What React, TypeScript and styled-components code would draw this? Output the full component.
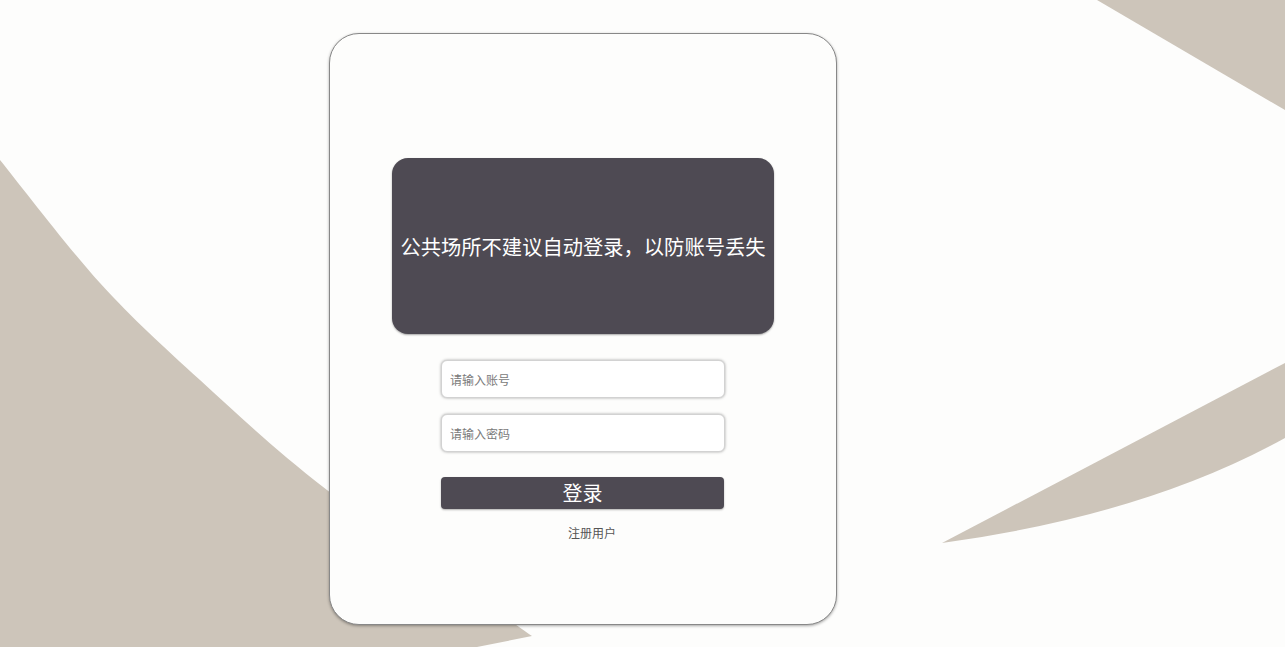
import React from "react";
import styled, { createGlobalStyle } from "styled-components";

const COLORS = {
  page: "#fdfdfc",
  beige: "#cdc5ba",
  dark: "#4e4a53",
  hint: "#7a7a7a",
  link: "#555555",
};

const GlobalStyle = createGlobalStyle`
  html, body {
    margin: 0;
    padding: 0;
    background: ${COLORS.page};
    font-family: "Noto Sans CJK SC", "Noto Sans", sans-serif;
  }
`;

const Backdrop: React.FC = () => (
  <BackdropSvg viewBox="0 0 1285 647" preserveAspectRatio="none">
    <path
      fill={COLORS.beige}
      d="M0,160 C16.7,180.5 66.7,246.3 100,283 C133.3,319.7 162.2,345.5 200,380 C237.8,414.5 271.7,447.3 327,490 C382.3,532.7 497.8,611.7 532,636 L477,647 L0,647 Z"
    />
    <path fill={COLORS.beige} d="M1097,0 L1285,0 L1285,110 Z" />
    <path fill={COLORS.beige} d="M942,543 L1285,363 L1285,438 Q1146,515 942,543 Z" />
  </BackdropSvg>
);

const App: React.FC = () => {
  return (
    <>
      <GlobalStyle />
      <Page>
        <Backdrop />
        <LoginCard>
          <Notice>公共场所不建议自动登录，以防账号丢失</Notice>
          <Form onSubmit={(e) => e.preventDefault()}>
            <Field type="text" placeholder="请输入账号" />
            <Field type="password" placeholder="请输入密码" />
            <SubmitButton type="submit">登录</SubmitButton>
          </Form>
          <RegisterLink href="#">注册用户</RegisterLink>
        </LoginCard>
      </Page>
    </>
  );
};

export default App;

const Page = styled.main`
  position: relative;
  width: 1285px;
  height: 647px;
  overflow: hidden;
  box-sizing: border-box;
  padding: 33px 0 0 329px;
  display: flex;
  align-items: flex-start;
`;

const BackdropSvg = styled.svg`
  position: absolute;
  inset: 0;
  width: 100%;
  height: 100%;
  z-index: 0;
`;

const LoginCard = styled.section`
  position: relative;
  z-index: 1;
  box-sizing: border-box;
  width: 508px;
  height: 592px;
  padding-top: 124px;
  background: ${COLORS.page};
  border: 1px solid #888888;
  border-radius: 30px;
  box-shadow: 0 1px 3px rgba(0, 0, 0, 0.35);
  display: flex;
  flex-direction: column;
  align-items: center;
`;

const Notice = styled.div`
  width: 382px;
  height: 176px;
  border-radius: 16px;
  background: ${COLORS.dark};
  box-shadow: 0 1px 2px rgba(0, 0, 0, 0.35);
  color: #ffffff;
  font-size: 20.3px;
  display: flex;
  align-items: center;
  justify-content: center;
  white-space: nowrap;
`;

const Form = styled.form`
  margin-top: 26px;
  width: 284px;
  display: flex;
  flex-direction: column;
`;

const Field = styled.input`
  box-sizing: border-box;
  width: 284px;
  height: 38px;
  margin: 0 0 16px;
  padding: 0 8px;
  border: 1px solid #d2d2d2;
  border-radius: 6px;
  background: #ffffff;
  box-shadow: 0 0 3px rgba(0, 0, 0, 0.35);
  font-family: "Noto Sans CJK SC", "Noto Sans", sans-serif;
  font-size: 12px;
  color: #333;
  outline: none;

  &::placeholder {
    color: ${COLORS.hint};
  }
`;

const SubmitButton = styled.button`
  margin-top: 9px;
  width: 283px;
  height: 32px;
  border: none;
  border-radius: 4px;
  background: ${COLORS.dark};
  box-shadow: 0 1px 2px rgba(0, 0, 0, 0.3);
  color: #ffffff;
  font-family: "Noto Sans CJK SC", "Noto Sans", sans-serif;
  font-size: 20px;
  line-height: 32px;
  padding: 0;
  cursor: pointer;
`;

const RegisterLink = styled.a`
  margin-top: 16px;
  margin-left: 18px;
  font-size: 12px;
  line-height: 16px;
  color: ${COLORS.link};
  text-decoration: none;
`;
